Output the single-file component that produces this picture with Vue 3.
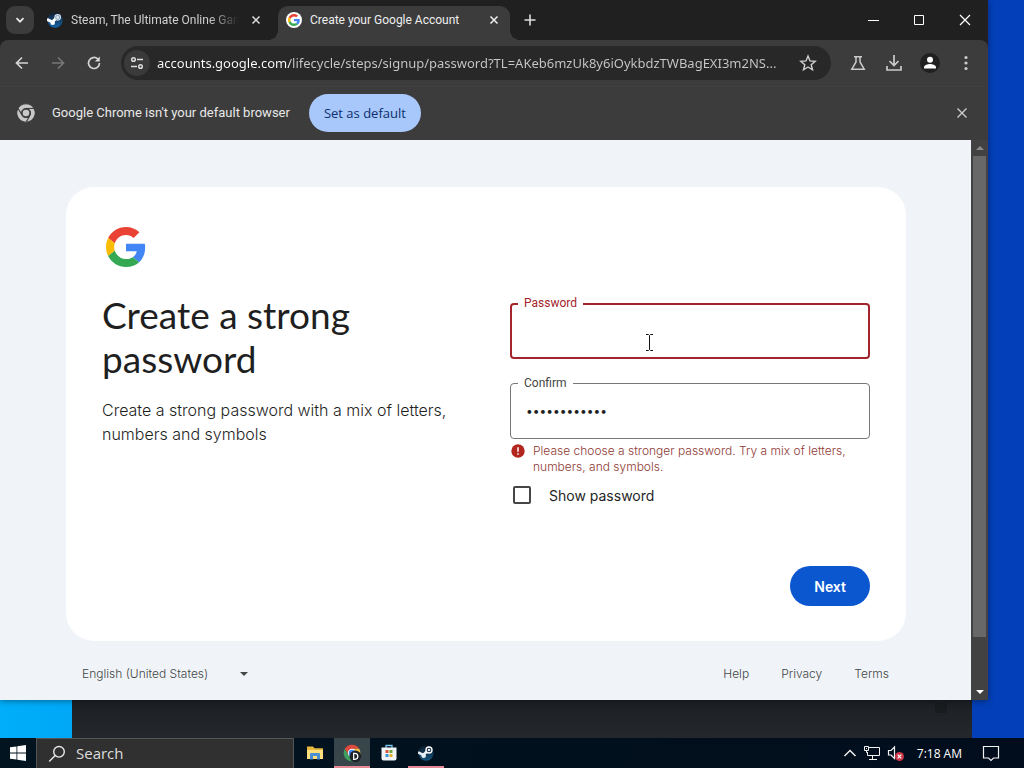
<script setup>
import { ref } from 'vue'

const address = ref('accounts.google.com/lifecycle/steps/signup/password?TL=AKeb6mzUk8y6iOykbdzTWBagEXI3m2NS...')
const password = ref('')
const confirmation = ref('password1234')
const showPassword = ref(false)
const search = ref('')
const wedges = [
  { turn: 'rotate(0 12 12)', fill: '#e0483c' },
  { turn: 'rotate(120 12 12)', fill: '#f3c042' },
  { turn: 'rotate(240 12 12)', fill: '#3f9f5c' }
]
const wedge = 'M3.34 7A10 10 0 0 1 20.66 7H12A5 5 0 0 0 7.67 14.5Z'
const footerLinks = ['Help', 'Privacy', 'Terms']
</script>

<template>
  <div class="desktop">
    <div class="workspace">
      <div class="back-window"><span class="back-mark"></span></div>

      <main class="browser">
        <header class="tabstrip">
          <button class="tab-search" aria-label="Search tabs">
            <svg width="12" height="12" viewBox="0 0 12 12"><path d="M2.5 4.2 6 7.7l3.5-3.5" fill="none" stroke="#e8e8e8" stroke-width="1.8" /></svg>
          </button>
          <div class="tab idle">
            <svg class="favicon" width="16" height="16" viewBox="0 0 24 24">
              <defs><linearGradient id="steam-a" x2="0" y2="1"><stop offset="0" stop-color="#111d2e" /><stop offset="1" stop-color="#1466a8" /></linearGradient></defs>
              <circle cx="12" cy="12" r="11.5" fill="url(#steam-a)" />
              <path d="M0 11 8 15l6-6" fill="none" stroke="#fff" stroke-width="4.5" />
              <circle cx="16" cy="8" r="5" fill="#dce8f2" />
              <circle cx="16" cy="8" r="3" fill="none" stroke="#5d7d9c" stroke-width="1" />
              <circle cx="8.5" cy="16" r="3.5" fill="#fff" />
            </svg>
            <span class="tab-title faded">Steam, The Ultimate Online Gam</span>
            <button class="close" aria-label="Close tab"><svg width="10" height="10" viewBox="0 0 10 10"><path d="m1.5 1.5 7 7m0-7-7 7" stroke="#ddd" stroke-width="1.5" /></svg></button>
          </div>
          <div class="tab active">
            <svg class="favicon" width="16" height="16" viewBox="0 0 48 48">
              <circle cx="24" cy="24" r="24" fill="#fff" />
              <g transform="translate(6 6) scale(.75)">
                <path fill="#EA4335" d="M24 9.5c3.54 0 6.71 1.22 9.21 3.6l6.85-6.85C35.9 2.38 30.47 0 24 0 14.62 0 6.51 5.38 2.56 13.22l7.98 6.19C12.43 13.72 17.74 9.5 24 9.5z" />
                <path fill="#4285F4" d="M46.98 24.55c0-1.57-.15-3.09-.38-4.55H24v9.02h12.94c-.58 2.96-2.26 5.48-4.78 7.18l7.73 6c4.51-4.18 7.09-10.36 7.09-17.65z" />
                <path fill="#FBBC05" d="M10.53 28.59c-.48-1.45-.76-2.99-.76-4.59s.27-3.14.76-4.59l-7.98-6.19C.92 16.46 0 20.12 0 24c0 3.88.92 7.54 2.56 10.78l7.97-6.19z" />
                <path fill="#34A853" d="M24 48c6.48 0 11.93-2.13 15.89-5.81l-7.73-6c-2.15 1.45-4.92 2.3-8.16 2.3-6.26 0-11.57-4.22-13.47-9.91l-7.98 6.19C6.51 42.62 14.62 48 24 48z" />
              </g>
            </svg>
            <span class="tab-title">Create your Google Account</span>
            <button class="close" aria-label="Close tab"><svg width="10" height="10" viewBox="0 0 10 10"><path d="m1.5 1.5 7 7m0-7-7 7" stroke="#eee" stroke-width="1.5" /></svg></button>
          </div>
          <button class="new-tab" aria-label="New tab"><svg width="12" height="12" viewBox="0 0 12 12"><path d="M6 .5v11M.5 6h11" stroke="#ddd" stroke-width="1.6" /></svg></button>
          <div class="window-buttons">
            <button aria-label="Minimize"><svg width="12" height="12" viewBox="0 0 12 12"><path d="M1 6.5h11" stroke="#fff" /></svg></button>
            <button aria-label="Maximize"><svg width="12" height="12" viewBox="0 0 12 12"><path d="M1.5 1.5h9v9h-9z" fill="none" stroke="#fff" /></svg></button>
            <button aria-label="Close"><svg width="12" height="12" viewBox="0 0 12 12"><path d="m1 1 10 10m0-10L1 11" stroke="#fff" stroke-width="1.2" /></svg></button>
          </div>
        </header>

        <nav class="toolbar">
          <button class="tool" aria-label="Back"><svg width="16" height="16" viewBox="0 0 16 16"><path d="M14 8H3m5-5.5L2.5 8 8 13.5" fill="none" stroke="#d5d5d5" stroke-width="1.7" /></svg></button>
          <button class="tool" aria-label="Forward"><svg width="16" height="16" viewBox="0 0 16 16"><path d="M2 8h11M8 2.500 13.500 8 8 13.500" fill="none" stroke="#777" stroke-width="1.7" /></svg></button>
          <button class="tool" aria-label="Reload"><svg width="16" height="16" viewBox="0 0 16 16"><path d="M13.500 8A5.500 5.500 0 1 1 11.800 4l1 1" fill="none" stroke="#d5d5d5" stroke-width="1.700" /><path d="M13.800 1.500v5h-5z" fill="#d5d5d5" /></svg></button>
          <div class="omnibox">
            <button class="site" aria-label="View site information"><svg width="16" height="16" viewBox="0 0 16 16" fill="none" stroke="#ddd" stroke-width="1.500"><circle cx="4.500" cy="4.500" r="1.800" /><path d="M8 4.500h6M2 11.500h6" /><circle cx="11.500" cy="11.500" r="1.800" /></svg></button>
            <input class="address" type="text" aria-label="Address and search bar" v-model="address" />
            <button class="star" aria-label="Bookmark this tab"><svg width="18" height="18" viewBox="0 0 18 18"><path d="m9 2 2 4.900 5.200.400-4 3.400 1.300 5.100L9 13l-4.500 2.800 1.300-5.100-4-3.400L7 6.900z" fill="none" stroke="#d0d0d0" stroke-width="1.400" /></svg></button>
          </div>
          <button class="tool" aria-label="Experiments"><svg width="16" height="16" viewBox="0 0 16 16"><path d="M4 1.800h8M6 2v5L1.800 14.200h12.400L10 7V2" fill="none" stroke="#ccc" stroke-width="1.500" /></svg></button>
          <button class="tool" aria-label="Downloads"><svg width="18" height="18" viewBox="0 0 18 18"><path d="M9 1v10M4.500 7 9 11.500 13.500 7M2 12v4h14v-4" fill="none" stroke="#ccc" stroke-width="1.700" /></svg></button>
          <button class="tool" aria-label="Profile"><svg width="20" height="20" viewBox="0 0 20 20"><circle cx="10" cy="10" r="10" fill="#202020" /><circle cx="10" cy="6.800" r="3" fill="#fff" /><path d="M4 15.500v-1.200c0-2.300 4-3.300 6-3.300s6 1 6 3.300v1.200z" fill="#fff" /></svg></button>
          <button class="tool" aria-label="Menu"><svg width="16" height="16" viewBox="0 0 16 16" fill="#ccc"><circle cx="8" cy="2.500" r="1.600" /><circle cx="8" cy="8" r="1.600" /><circle cx="8" cy="13.500" r="1.600" /></svg></button>
        </nav>

        <section class="infobar">
          <svg width="22" height="22" viewBox="0 0 24 24"><g stroke="#3c3c3c" stroke-width="1" fill="#c8c8c8"><path v-for="w in wedges" :key="w.turn" :d="wedge" :transform="w.turn" /></g><circle cx="12" cy="12" r="5" fill="#3c3c3c" /><circle cx="12" cy="12" r="3.600" fill="#c8c8c8" /></svg>
          <span class="info-text">Google Chrome isn't your default browser</span>
          <button class="set-default">Set as default</button>
          <button class="info-close" aria-label="Close"><svg width="12" height="12" viewBox="0 0 12 12"><path d="m1.500 1.500 9 9m0-9-9 9" stroke="#ccc" stroke-width="1.400" /></svg></button>
        </section>

        <div class="viewport">
          <div class="page">
            <section class="card">
              <div class="intro">
                <svg class="logo" width="48" height="48" viewBox="-4.8 -4.8 57.6 57.6">
                  <path fill="#EA4335" d="M24 9.5c3.54 0 6.71 1.22 9.21 3.6l6.85-6.85C35.9 2.38 30.47 0 24 0 14.62 0 6.51 5.38 2.56 13.22l7.98 6.19C12.43 13.72 17.74 9.5 24 9.5z" />
                  <path fill="#4285F4" d="M46.98 24.55c0-1.57-.15-3.09-.38-4.55H24v9.02h12.94c-.58 2.96-2.26 5.48-4.78 7.18l7.73 6c4.51-4.18 7.09-10.36 7.09-17.65z" />
                  <path fill="#FBBC05" d="M10.53 28.59c-.48-1.45-.76-2.99-.76-4.59s.27-3.14.76-4.59l-7.98-6.19C.92 16.46 0 20.12 0 24c0 3.88.92 7.54 2.56 10.78l7.97-6.19z" />
                  <path fill="#34A853" d="M24 48c6.48 0 11.93-2.13 15.89-5.81l-7.73-6c-2.15 1.45-4.92 2.3-8.16 2.3-6.26 0-11.57-4.22-13.47-9.91l-7.98 6.19C6.51 42.62 14.62 48 24 48z" />
                </svg>
                <h1>Create a strong password</h1>
                <p>Create a strong password with a mix of letters, numbers and symbols</p>
              </div>
              <form class="fields" @submit.prevent>
                <div class="field invalid">
                  <input id="password" :type="showPassword ? 'text' : 'password'" v-model="password" />
                  <label for="password">Password</label>
                  <svg class="pointer" width="9" height="17" viewBox="0 0 9 17"><path d="M1 .5h2.500l1 1 1-1H8M1 16.500h2.500l1-1 1 1H8M4.500 1.500v14" fill="none" stroke="#111" /></svg>
                </div>
                <div class="field">
                  <input id="confirm" :type="showPassword ? 'text' : 'password'" v-model="confirmation" />
                  <label for="confirm">Confirm</label>
                </div>
                <div class="error">
                  <svg width="16" height="16" viewBox="0 0 16 16"><circle cx="8" cy="8" r="6.700" fill="#b3261e" /><path d="M8 4.200v4.600M8 10.200v1.600" stroke="#fff" stroke-width="1.500" /></svg>
                  <span>Please choose a stronger password. Try a mix of letters, numbers, and symbols.</span>
                </div>
                <label class="show"><input type="checkbox" v-model="showPassword" /><span>Show password</span></label>
                <button class="next" type="submit">Next</button>
              </form>
            </section>
            <footer class="footer">
              <div class="language">
                <select aria-label="Language"><option>English (United States)</option></select>
                <svg width="8" height="4" viewBox="0 0 8 4"><path d="M0 0h8L4 4z" fill="#444746" /></svg>
              </div>
              <nav class="links"><a v-for="l in footerLinks" :key="l" href="#">{{ l }}</a></nav>
            </footer>
          </div>
          <div class="scrollbar" aria-hidden="true">
            <span class="arrow"><svg width="8" height="4" viewBox="0 0 8 4"><path d="M0 4h8L4 0z" fill="#8b8b8b" /></svg></span>
            <span class="thumb"></span>
            <span class="arrow"><svg width="8" height="4" viewBox="0 0 8 4"><path d="M0 0h8L4 4z" fill="#fff" /></svg></span>
          </div>
        </div>
      </main>
    </div>

    <footer class="taskbar">
      <button class="start" aria-label="Start"><svg width="16" height="16" viewBox="0 0 16 16"><path d="M0 2.300 6.500 1.400v6.200H0zM7.300 1.300 16 0v7.600H7.300zM0 8.400h6.500v6.200L0 13.700zM7.300 8.400H16V16l-8.700-1.300z" fill="#fff" /></svg></button>
      <label class="search">
        <svg width="18" height="18" viewBox="0 0 18 18"><circle cx="11" cy="6.800" r="5.300" fill="none" stroke="#e8e8e8" stroke-width="1.400" /><path d="M7.200 10.600 1.200 16.600" stroke="#e8e8e8" stroke-width="1.400" /></svg>
        <input type="text" v-model="search" placeholder="Search" aria-label="Search" />
      </label>
      <div class="apps">
        <button aria-label="File Explorer"><svg width="18" height="18" viewBox="0 0 18 18"><path d="M1 2.500h6l1.500 1.700H17V15H1z" fill="#e9b83f" /><path d="M1 6h16v9H1z" fill="#ffdf7c" /><path d="M4 15.500V10q0-1 1-1h8q1 0 1 1v5.500h-3V12H7v3.500z" fill="#4a8fd0" /></svg></button>
        <button class="running current" aria-label="Google Chrome"><svg width="20" height="20" viewBox="0 0 24 24"><path v-for="w in wedges" :key="w.turn" :d="wedge" :transform="w.turn" :fill="w.fill" /><circle cx="12" cy="12" r="5" fill="#fff" /><circle cx="12" cy="12" r="3.900" fill="#4285f4" /><circle cx="16" cy="16" r="7" fill="#1c2226" /><path d="M14 12.500h1.500a3.500 3.500 0 0 1 0 7H14z" fill="none" stroke="#fff" stroke-width="1.500" /></svg></button>
        <button aria-label="Microsoft Store"><svg width="18" height="18" viewBox="0 0 18 18"><path d="M6 4V1.500h6V4" fill="none" stroke="#79c5ee" stroke-width="1.300" /><path d="M1.500 3.500h15v11q0 2-2 2h-11q-2 0-2-2z" fill="#f2f5f7" /><path d="M5.500 6h3v3h-3z" fill="#d9573c" /><path d="M9.500 6h3v3h-3z" fill="#6fa23a" /><path d="M5.500 10h3v3h-3z" fill="#3693d4" /><path d="M9.500 10h3v3h-3z" fill="#e8ac2d" /></svg></button>
        <button class="running" aria-label="Steam"><svg width="16" height="16" viewBox="0 0 24 24">
          <defs><linearGradient id="steam-b" x2="0" y2="1"><stop offset="0" stop-color="#0c1828" /><stop offset="1" stop-color="#12547f" /></linearGradient></defs>
          <circle cx="12" cy="12" r="11.500" fill="url(#steam-b)" />
          <path d="M0 11 8 15l6-6" fill="none" stroke="#e8eef3" stroke-width="4" />
          <circle cx="16.500" cy="7.500" r="4.500" fill="#14253a" stroke="#fff" stroke-width="2" />
          <circle cx="16.500" cy="7.500" r="2" fill="#dfe8ef" /><circle cx="8.500" cy="16" r="3.500" fill="#e8eef3" />
        </svg></button>
      </div>
      <div class="tray">
        <button aria-label="Show hidden icons"><svg width="14" height="14" viewBox="0 0 14 14"><path d="m1.500 10 5.500-5.500 5.500 5.500" fill="none" stroke="#eee" stroke-width="1.500" /></svg></button>
        <button aria-label="Network"><svg width="18" height="16" viewBox="0 0 18 16"><path d="M6 2.500h10.500v8H4.500V7M9.500 10.500v4M6 14.500h8M1.500 1.500h4v4h-4zM3.500 5.500v2h1M3.500 3v1" fill="none" stroke="#f2f2f2" /></svg></button>
        <button aria-label="Volume muted"><svg width="18" height="16" viewBox="0 0 18 16"><path d="M1.500 5.500H4L7.500 2v11.500L4 10H1.500z" fill="none" stroke="#f2f2f2" stroke-width="1.200" /><circle cx="12.500" cy="11.500" r="4.500" fill="#c93446" /><path d="m10.700 9.700 3.600 3.600m0-3.600-3.600 3.600" stroke="#fff" stroke-width="1.200" /></svg></button>
        <time>7:18 AM</time>
        <button class="notify" aria-label="Notifications"><svg width="18" height="17" viewBox="0 0 18 17"><path d="M1.500 1.500h15v11.500h-5L9 15.500 6.500 13h-5z" fill="none" stroke="#f2f2f2" stroke-width="1.200" /></svg></button>
      </div>
    </footer>
  </div>
</template>

<style>
html, body { margin: 0; }
</style>

<style scoped>
* { box-sizing: border-box; }
button { padding: 0; border: 0; background: none; font: inherit; color: inherit; display: flex; align-items: center; justify-content: center; }
svg { flex: none; }
.desktop { display: flex; flex-direction: column; min-height: 100vh; font-family: "Open Sans", "Noto Sans", sans-serif; }
.workspace { position: relative; flex: 1; display: flex; padding: 0 36px 38px 0; background: linear-gradient(90deg, #00aefa 0, #00a5f5 10%, #0240b8 90%, #033fb8 100%); }
.back-window { position: absolute; left: 72px; right: 52px; top: 40px; bottom: 0; background: linear-gradient(#1c2024 calc(100% - 38px), #24282d 100%); }
.back-mark { position: absolute; right: 25px; bottom: 25px; width: 12px; height: 10px; background: #191c1e; }
.browser { position: relative; flex: 1; min-width: 0; display: flex; flex-direction: column; background: #202020; box-shadow: 0 1px 6px rgba(0, 0, 0, .4); }

.tabstrip { height: 40px; display: flex; align-items: center; color: #d0d0d0; font: 12px Roboto, sans-serif; }
.tab-search { width: 28px; height: 28px; margin-left: 6px; border-radius: 9px; background: #3c3c3c; }
.tab { display: flex; align-items: center; }
.tab.idle { width: 244px; padding: 0 16px 0 13px; }
.tab.active { position: relative; align-self: flex-end; width: 232px; height: 34px; padding: 0 10px 6px 8px; border-radius: 10px 10px 0 0; background: #3c3c3c; color: #eee; }
.tab.active::before, .tab.active::after { content: ""; position: absolute; bottom: 0; width: 10px; height: 10px; }
.tab.active::before { left: -10px; background: radial-gradient(circle at 0 0, #202020 10px, #3c3c3c 10px); }
.tab.active::after { right: -10px; background: radial-gradient(circle at 100% 0, #202020 10px, #3c3c3c 10px); }
.favicon { margin-right: 8px; }
.tab-title { flex: 1; white-space: nowrap; overflow: hidden; }
.faded { -webkit-mask-image: linear-gradient(90deg, #000 82%, transparent 100%); mask-image: linear-gradient(90deg, #000 82%, transparent 100%); }
.close { width: 12px; height: 16px; margin-left: 11px; }
.new-tab { width: 28px; height: 28px; margin-left: 6px; }
.window-buttons { margin-left: auto; display: flex; }
.window-buttons button { width: 46px; height: 40px; }

.toolbar { height: 47px; display: flex; align-items: center; gap: 8px; padding: 0 8px; background: #3c3c3c; border-bottom: 1px solid #404040; border-radius: 8px 8px 0 0; }
.tool { width: 28px; height: 28px; }
.omnibox { flex: 1; min-width: 0; height: 34px; margin: 0 5px; display: flex; align-items: center; padding: 0 14px 0 3px; border-radius: 17px; background: #282828; }
.site { width: 26px; height: 26px; margin-right: 7px; border-radius: 50%; background: #3a3a3a; }
.address { flex: 1; min-width: 0; border: 0; padding: 0; outline: 0; background: linear-gradient(90deg, #fff 133px, #c9c9c9 133px); -webkit-background-clip: text; background-clip: text; -webkit-text-fill-color: transparent; font: 13px "Noto Sans", sans-serif; }
.star { width: 18px; height: 18px; margin-left: 8px; }

.infobar { height: 53px; display: flex; align-items: center; padding: 0 20px 2px 15px; background: #3c3c3c; color: #e8e8e8; font: 13px Roboto, sans-serif; }
.info-text { margin: 0 19px 0 15px; }
.set-default { height: 38px; padding: 0 15px; border-radius: 19px; background: #a8c7fa; color: #0b2f6f; font: 13px "Open Sans", sans-serif; }
.info-close { margin-left: auto; }

.viewport { flex: 1; display: flex; min-height: 0; }
.page { flex: 1; min-width: 0; padding: 47px 65px 0 66px; background: #f0f4f9; font-family: Inter, Roboto, sans-serif; color: #1f1f1f; }
.card { display: grid; grid-template-columns: 1fr 1fr; gap: 48px; padding: 36px 36px 35px; border-radius: 28px; background: #fff; }
.logo { display: block; margin-bottom: 22px; }
h1 { margin: 0 0 17px; font: 400 37px/44px Lato, sans-serif; }
p { margin: 0; font-size: 16px; line-height: 24px; font-weight: 300; }
.fields { display: flex; flex-direction: column; padding-top: 80px; }
.field { position: relative; height: 56px; margin-bottom: 24px; }
.field input { display: block; width: 100%; height: 100%; padding: 0 15px 2px; border: 1px solid #747775; border-radius: 4px; outline: 0; background: #fff; color: #1f1f1f; font: 12px Inter, sans-serif; }
.field label { position: absolute; left: 8px; top: -8px; padding: 0 6px; background: #fff; color: #444746; font: 12px/16px Roboto, sans-serif; }
.field.invalid input { border: 2px solid #a3242b; }
.field.invalid label { color: #a3242b; }
.pointer { position: absolute; left: 135px; top: 31px; }
.field + .error { margin-top: -20px; }
.error { display: flex; gap: 7px; color: #8f3a36; font-size: 12px; line-height: 16px; font-weight: 300; }
.show { display: flex; align-items: center; gap: 18px; height: 40px; padding-left: 3px; font-size: 14px; }
.show input { appearance: none; width: 18px; height: 18px; margin: 0; border: 2px solid #444746; border-radius: 2px; }
.show input:checked { background: #0b57d0; }
.next { align-self: flex-end; height: 40px; margin-top: 51px; padding: 0 24px; border-radius: 20px; background: #0b57d0; color: #fff; font-size: 14px; font-weight: 600; }
.footer { display: flex; align-items: center; justify-content: space-between; padding: 25px 17px 0 16px; color: #444746; font-size: 12px; line-height: 16px; font-weight: 300; }
.language { position: relative; display: flex; align-items: center; width: 166px; }
.language select { appearance: none; width: 100%; border: 0; padding: 0; background: none; font: inherit; color: inherit; }
.language svg { position: absolute; right: 0; pointer-events: none; }
.links { display: flex; gap: 32px; }
.links a { color: inherit; text-decoration: none; }

.scrollbar { width: 17px; display: flex; flex-direction: column; background: #424242; }
.arrow { height: 16px; display: flex; align-items: center; justify-content: center; }
.thumb { flex: 1; margin: 0 2px 47px; background: #686868; }

.taskbar { height: 30px; display: flex; background: linear-gradient(90deg, #02141f, #010d1c); color: #fff; }
.start { width: 36px; }
.search { width: 258px; display: flex; align-items: center; gap: 10px; padding-left: 11px; border: 1px solid #555; border-bottom: 0; background: #303030; }
.search input { flex: 1; min-width: 0; border: 0; padding: 0 0 2px; outline: 0; background: none; color: #ddd; font: 15px "Open Sans", sans-serif; }
.search input::placeholder { color: #ddd; opacity: 1; }
.apps { display: flex; gap: 1px; margin-left: 3px; }
.apps button { width: 36px; border-bottom: 2px solid transparent; border-top: 2px solid transparent; }
.apps .running { border-bottom-color: #e88a96; }
.apps .current { background: #38464b; border-top-color: #38464b; }
.tray { margin-left: auto; display: flex; align-items: center; gap: 6px; padding-right: 24px; font-size: 12px; }
.tray time { margin: 0 14px 0 6px; }
</style>
